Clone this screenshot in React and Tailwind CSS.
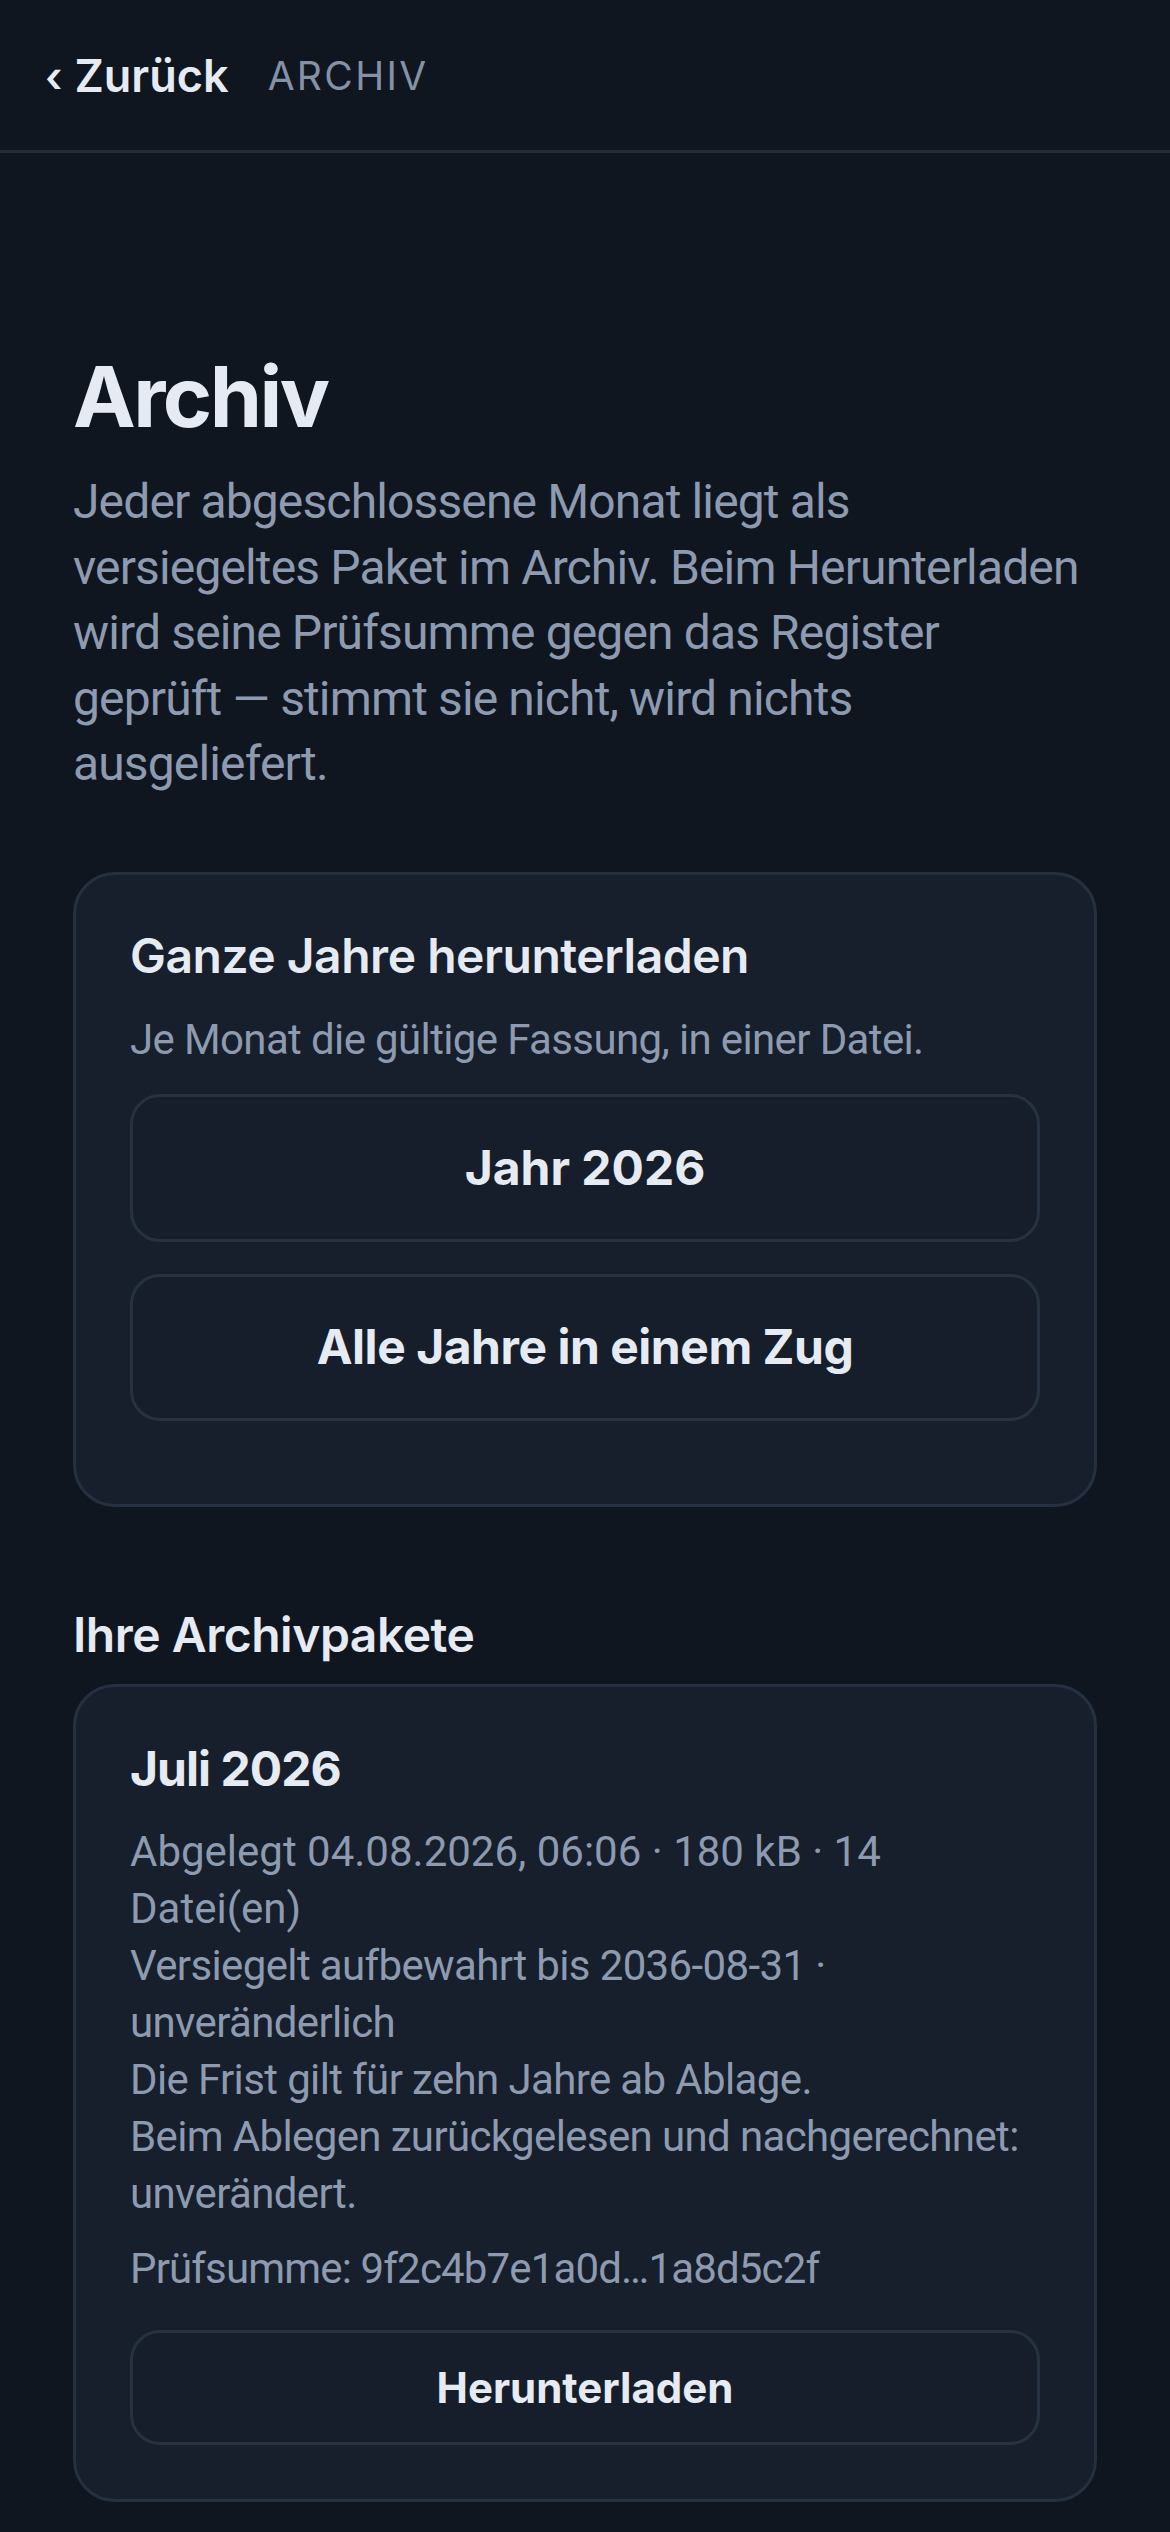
import React from "react";

const metaLines = [
  { text: "Abgelegt 04.08.2026, 06:06 · 180 kB · 14 Datei(en)", tight: false },
  { text: "Versiegelt aufbewahrt bis 2036-08-31 · unveränderlich", tight: true },
  { text: "Die Frist gilt für zehn Jahre ab Ablage.", tight: true },
  { text: "Beim Ablegen zurückgelesen und nachgerechnet: unverändert.", tight: true },
];

const body = { fontFamily: "Roboto, 'Noto Sans', sans-serif" };

export default function App() {
  return (
    <div
      className="min-h-screen bg-[#0f1620] text-[#e6ebf3]"
      style={{ fontFamily: "Inter, 'Noto Sans', sans-serif" }}
    >
      {/* Top bar */}
      <header className="flex h-[153px] items-center border-b-[3px] border-[#222c39] px-[45px] pt-[2px]">
        <a href="#" className="flex items-center gap-[12px] text-[45px] font-semibold text-[#e6ebf3]">
          <span className="text-[42px] font-semibold">‹</span>
          <span>Zurück</span>
        </a>
        <span className="ml-[39px] text-[39px] tracking-[0.06em] text-[#8592a6]">ARCHIV</span>
      </header>

      <main className="px-[73px] pt-[193px] pb-[30px]">
        <h1 className="text-[84px] font-bold leading-[101px] tracking-[-0.03em]">Archiv</h1>
        <p className="mt-[22px] text-[48px] leading-[65.5px] tracking-[-0.018em] text-[#8d9ab0]" style={body}>
          Jeder abgeschlossene Monat liegt als versiegeltes Paket im Archiv. Beim Herunterladen wird seine
          Prüfsumme gegen das Register geprüft — stimmt sie nicht, wird nichts ausgeliefert.
        </p>

        {/* Whole years */}
        <section className="mt-[75px] rounded-[42px] border-[3px] border-[#253040] bg-[#161f2b] px-[54px] pt-[52px] pb-[83px]">
          <h2 className="text-[48px] font-semibold leading-[58px] tracking-[-0.01em]">Ganze Jahre herunterladen</h2>
          <p className="mt-[28px] text-[42px] leading-[54px] tracking-[-0.015em] text-[#8d9ab0]" style={body}>
            Je Monat die gültige Fassung, in einer Datei.
          </p>
          <div className="mt-[27px] flex flex-col gap-[32px]">
            <button className="h-[148px] w-full rounded-[30px] border-[3px] border-[#263241] bg-[#151e2a] text-[48px] font-bold text-[#e6ebf3]">
              Jahr 2026
            </button>
            <button className="h-[147px] w-full rounded-[30px] border-[3px] border-[#263241] bg-[#151e2a] text-[48px] font-bold tracking-[-0.01em] text-[#e6ebf3]">
              Alle Jahre in einem Zug
            </button>
          </div>
        </section>

        <h2 className="mt-[99px] text-[48px] font-semibold leading-[58px] tracking-[-0.01em]">Ihre Archivpakete</h2>

        {/* Package */}
        <article className="mt-[20px] rounded-[42px] border-[3px] border-[#253040] bg-[#161f2b] px-[54px] pt-[53px] pb-[54px]">
          <h3 className="text-[48px] font-bold leading-[58px] tracking-[-0.02em]">Juli 2026</h3>
          <div className="mt-[25px] text-[42px] leading-[57px] text-[#8d9ab0]" style={body}>
            {metaLines.map((line) => (
              <p key={line.text} className={line.tight ? "tracking-[-0.015em]" : "tracking-[0em]"}>
                {line.text}
              </p>
            ))}
          </div>
          <p className="mt-[18px] text-[42px] leading-[57px] tracking-[-0.02em] text-[#8d9ab0]" style={body}>
            Prüfsumme: 9f2c4b7e1a0d…1a8d5c2f
          </p>
          <button className="mt-[33px] h-[115px] w-full rounded-[30px] border-[3px] border-[#263241] bg-[#151e2a] text-[42px] font-bold text-[#e6ebf3]">
            Herunterladen
          </button>
        </article>
      </main>
    </div>
  );
}
